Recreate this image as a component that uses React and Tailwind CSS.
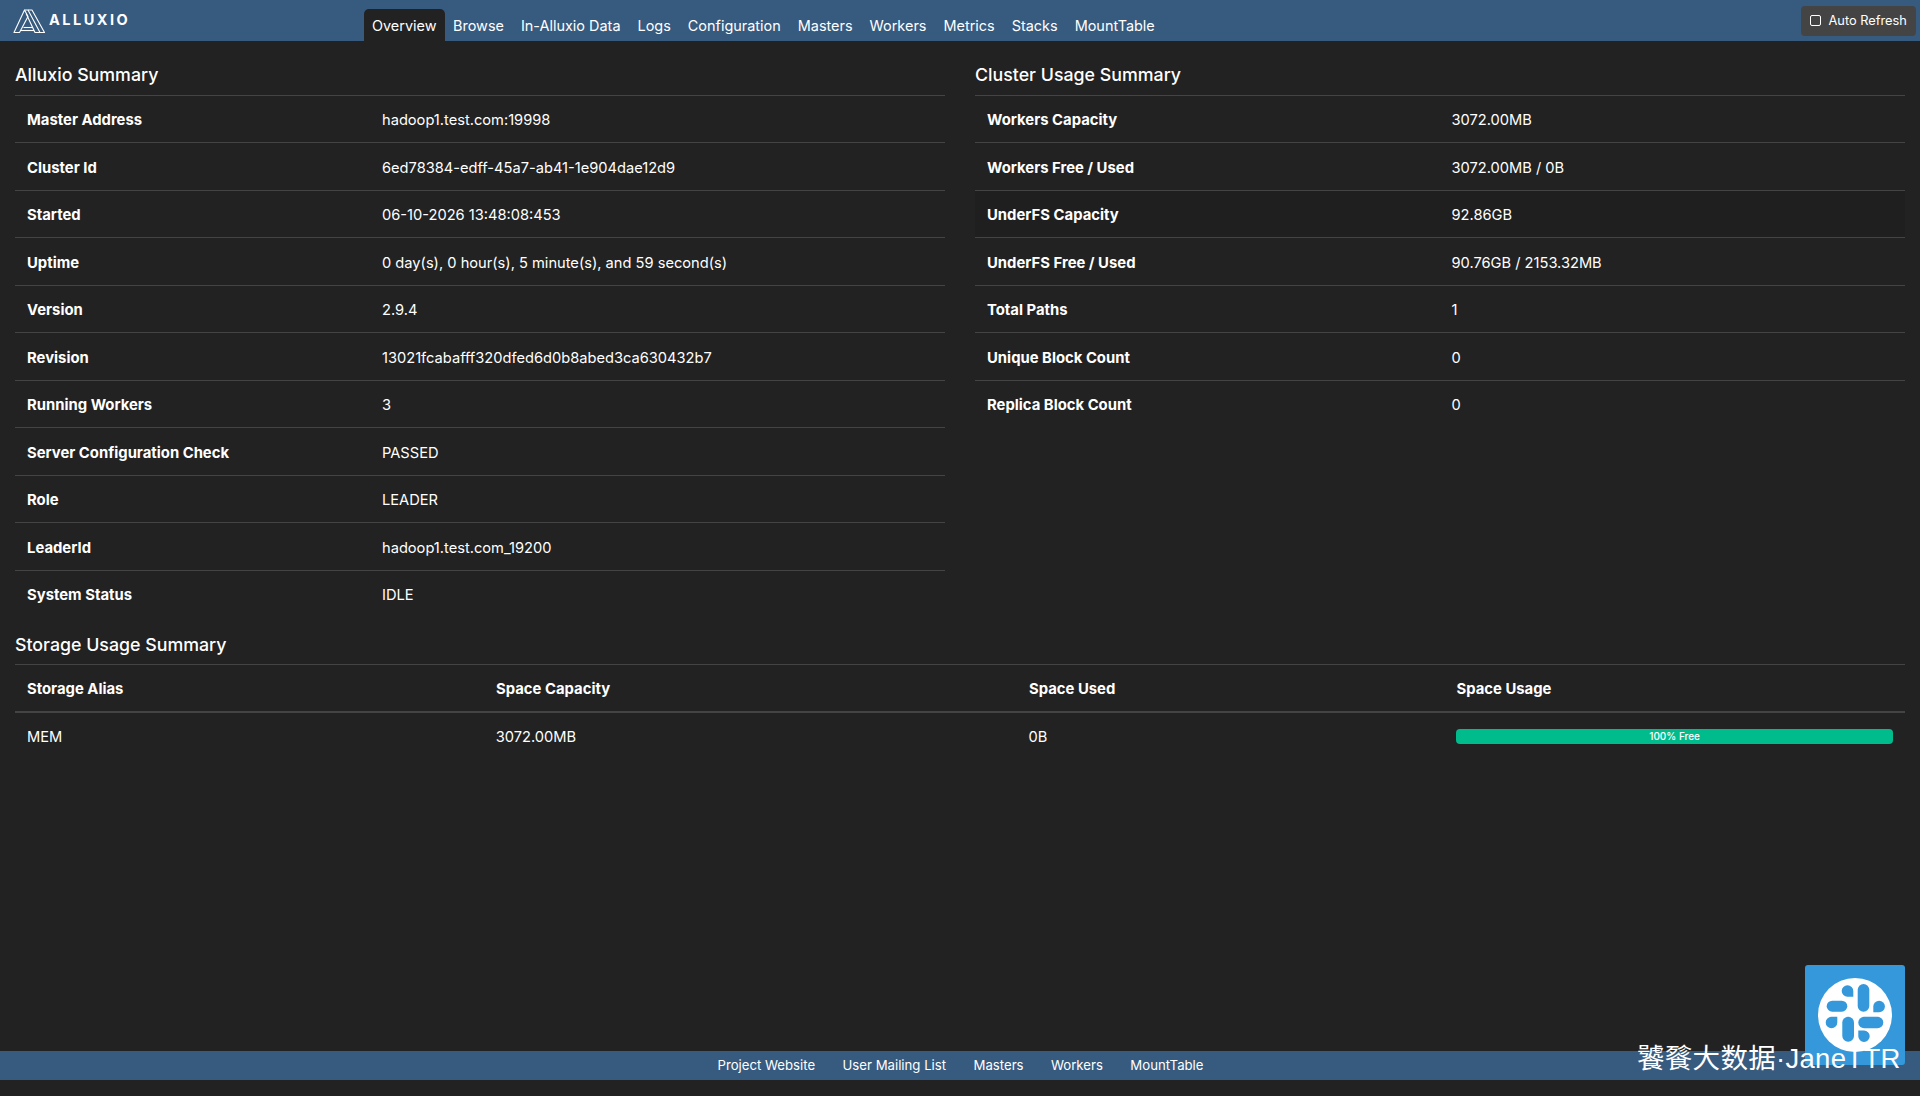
const font = { fontFamily: "Inter, 'Noto Sans CJK SC', sans-serif" };
const navItems = ["Browse", "In-Alluxio Data", "Logs", "Configuration", "Masters", "Workers", "Metrics", "Stacks", "MountTable"];
const footerItems = ["Project Website", "User Mailing List", "Masters", "Workers", "MountTable"];
const summary = [
  ["Master Address", "hadoop1.test.com:19998"],
  ["Cluster Id", "6ed78384-edff-45a7-ab41-1e904dae12d9"],
  ["Started", "06-10-2026 13:48:08:453"],
  ["Uptime", "0 day(s), 0 hour(s), 5 minute(s), and 59 second(s)"],
  ["Version", "2.9.4"],
  ["Revision", "13021fcabafff320dfed6d0b8abed3ca630432b7"],
  ["Running Workers", "3"],
  ["Server Configuration Check", "PASSED"],
  ["Role", "LEADER"],
  ["LeaderId", "hadoop1.test.com_19200"],
  ["System Status", "IDLE"],
];
const usage = [
  ["Workers Capacity", "3072.00MB"],
  ["Workers Free / Used", "3072.00MB / 0B"],
  ["UnderFS Capacity", "92.86GB", true],
  ["UnderFS Free / Used", "90.76GB / 2153.32MB"],
  ["Total Paths", "1"],
  ["Unique Block Count", "0"],
  ["Replica Block Count", "0"],
];

function KeyTable({ rows, keyWidth }) {
  return (
    <div>
      {rows.map(([k, v, hovered]) => (
        <div key={k} className={`flex h-[47.5px] items-center border-t border-[#444] px-3 pt-[2px] text-[14.65px] leading-[22px] text-white ${hovered ? "bg-[#1f1f1f]" : ""}`}>
          <div className="flex items-baseline">
            <div className={`${keyWidth} shrink-0 text-[14.85px] font-bold`}>{k}</div>
            <div>{v}</div>
          </div>
        </div>
      ))}
    </div>
  );
}

function Logo() {
  return (
    <svg width="33" height="26" viewBox="0 0 33 26" fill="none" stroke="white" strokeWidth="1.1" strokeLinejoin="round" className="shrink-0">
      <path d="M1 24.5 L11.5 2 L15 8.5 L6.5 24.5 Z" />
      <path d="M11.5 2 L15 2 L27 24.5 L22 24.5 L13.2 5.8" />
      <path d="M15 2 L19 2 L31.5 24.5 L27 24.5" />
      <path d="M10.5 19.5 L20 19.5" />
      <path d="M7.5 22.5 L21 22.5" />
    </svg>
  );
}

function SlackLike() {
  return (
    <svg width="74" height="74" viewBox="0 0 74 74">
      <circle cx="37" cy="37" r="37" fill="white" />
      <g fill="#3498db">
        <rect x="8.7" y="22.7" width="20.6" height="11" rx="5.5" />
        <path d="M35.3 18.8 H29.5 A5.8 5.8 0 1 1 35.3 13 Z" />
        <rect x="39.7" y="6" width="11.6" height="27.7" rx="5.8" />
        <path d="M55.3 34.3 V28.5 A5.8 5.8 0 1 1 61.1 34.3 Z" />
        <rect x="40.3" y="38.7" width="25" height="11.6" rx="5.8" />
        <path d="M40.3 52.5 H46 A5.7 5.7 0 1 1 40.3 58.2 Z" />
        <rect x="24.3" y="38.7" width="11.7" height="25" rx="5.8" />
        <path d="M19.3 38.7 V44.5 A5.8 5.8 0 1 1 13.5 38.7 Z" />
      </g>
    </svg>
  );
}

export default function App() {
  return (
    <div style={font} className="relative flex h-[1096px] w-[1920px] flex-col overflow-hidden bg-[#222] text-white">
      <header className="flex h-[41px] shrink-0 bg-[#375a7f]">
        <div className="flex w-[364px] shrink-0 items-start gap-[3px] pl-[13px] pt-[8px]">
          <Logo />
          <span className="pt-[3px] text-[14.5px] leading-[18px] font-bold tracking-[2.5px]">ALLUXIO</span>
        </div>
        <nav className="flex items-end text-[14.45px]">
          <div className="flex h-[32px] items-center rounded-t-[5px] bg-[#222] px-2 pt-px">Overview</div>
          {navItems.map((n) => (
            <div key={n} className="flex h-[32px] items-center px-[8.5px] pt-px">{n}</div>
          ))}
        </nav>
        <div className="ml-auto pr-1 pt-[6px]">
          <div className="flex h-[30px] w-[115px] items-center gap-[7.5px] rounded bg-[#444] pb-px pl-[9px] text-[12.8px]">
            <span className="h-[11px] w-[11px] rounded-[2px] border-[1.2px] border-white" />
            Auto Refresh
          </div>
        </div>
      </header>

      <main className="flex-1 px-[15px]">
        <div className="flex gap-[30px]">
          <section className="w-[930px]">
            <h5 className="flex h-[53.9px] items-end pb-[9px] text-[17.8px] leading-[22px] font-medium">Alluxio Summary</h5>
            <KeyTable rows={summary} keyWidth="w-[355px]" />
          </section>
          <section className="w-[930px]">
            <h5 className="flex h-[53.9px] items-end pb-[9px] text-[17.8px] leading-[22px] font-medium">Cluster Usage Summary</h5>
            <KeyTable rows={usage} keyWidth="w-[464.5px]" />
          </section>
        </div>
        <section>
          <h5 className="flex h-[46.6px] items-end pb-[8px] text-[17.8px] leading-[22px] font-medium">Storage Usage Summary</h5>
          <div className="flex h-[49px] items-center border-t border-b-2 border-[#444] px-3 pt-[2px] text-[14.85px] font-bold">
            <div className="w-[469px]">Storage Alias</div>
            <div className="w-[533px]">Space Capacity</div>
            <div className="w-[427.5px]">Space Used</div>
            <div>Space Usage</div>
          </div>
          <div className="flex h-[48px] items-center px-3 pt-[2px] text-[14.65px]">
            <div className="w-[469px]">MEM</div>
            <div className="w-[533px]">3072.00MB</div>
            <div className="w-[428px]">0B</div>
            <div className="mb-[3px] flex h-[15px] w-[437px] items-center justify-center rounded-[4px] bg-[#00bc8c] text-[10px] font-medium">100% Free</div>
          </div>
        </section>
      </main>

      <footer className="absolute top-[1051px] left-0 flex h-[29px] w-full items-center justify-center gap-[27.4px] bg-[#375a7f] pl-px text-[13.2px]">
        {footerItems.map((f) => <span key={f}>{f}</span>)}
      </footer>

      <div className="absolute top-[965px] left-[1805px] flex h-[100px] w-[100px] items-center justify-center rounded-[3px] bg-[#3498db]">
        <SlackLike />
      </div>
      <div className="absolute top-[1041px] left-[1637px] text-[27.5px] leading-[36px] tracking-[0.3px] whitespace-nowrap" style={{ fontFamily: "'Liberation Sans', 'Noto Sans CJK SC', sans-serif" }}>饕餮大数据·JaneTTR</div>
    </div>
  );
}
